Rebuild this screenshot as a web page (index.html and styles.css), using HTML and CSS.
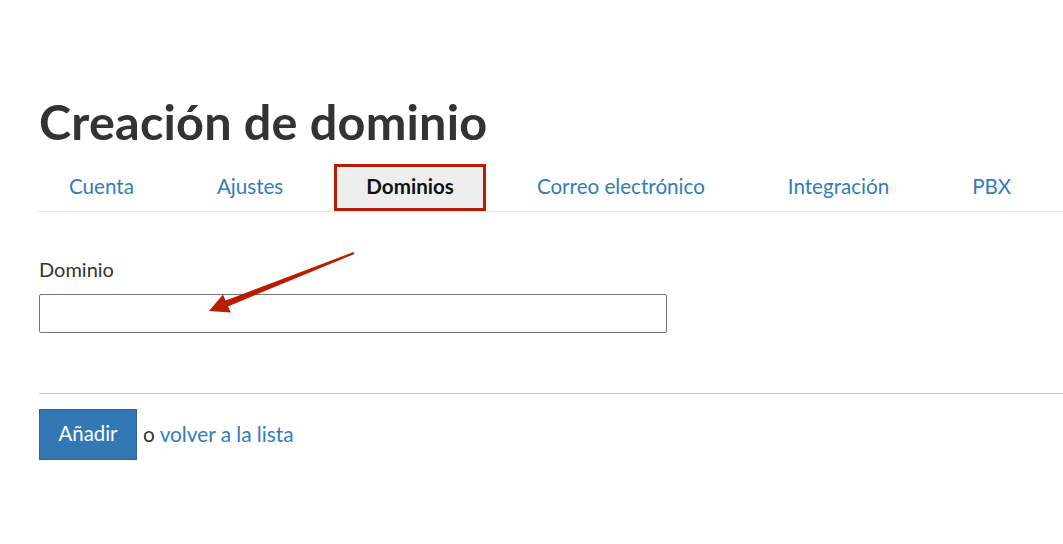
FILE: index.html
```html
<html>
  <head>
    <title>Creación de dominio</title>
    <meta name="viewport" content="width=device-width, initial-scale=1.0">
    <link rel="stylesheet" href="styles.css">
  </head>

  <body>
    <div class="page">
      <h1 class="title">Creación de dominio</h1>

      <ul class="tabs">
        <li class="tab"><a href="#">Cuenta</a></li>
        <li class="tab"><a href="#">Ajustes</a></li>
        <li class="tab active"><a href="#">Dominios</a></li>
        <li class="tab"><a href="#">Correo electrónico</a></li>
        <li class="tab"><a href="#">Integración</a></li>
        <li class="tab"><a href="#">PBX</a></li>
      </ul>

      <form class="domain-form">
        <div class="field">
          <label for="domain">Dominio</label>
          <input type="text" id="domain">
        </div>

        <div class="actions">
          <button type="button" class="btn-add">Añadir</button>
          <span class="back">o <a href="#">volver a la lista</a></span>
        </div>
      </form>
    </div>

    <!-- annotation arrow -->
    <svg class="arrow" width="1063" height="544" viewBox="0 0 1063 544">
      <polygon fill="#b81d00" points="209,311 223,294.5 225.6,300.4 353.6,252 354.4,254 228,306.4 231,312.5"/>
    </svg>
  </body>
</html>
```

FILE: styles.css
```css
*{
  margin: 0px;
  padding: 0px;
  box-sizing: border-box;
}

body{
  font-family: "Lato", "Open Sans", sans-serif;
  color: #333333;
  background-color: white;
  position: relative;
}

.page{
  padding: 93px 0px 0px 39px;
}

.title{
  font-size: 48.6px;
  font-weight: 700;
  line-height: 56px;
  color: #333333;
  letter-spacing: 0.2px;
}

.tabs{
  list-style-type: none;
  display: flex;
  margin-top: 15px;
  margin-left: -2px;
  border-bottom: 1px solid #e6e6e6;
}

.tab{
  margin-right: 19px;
  border: 3px solid transparent;
}

.tab a{
  display: block;
  padding: 0px 29px 2px 29px;
  height: 41px;
  line-height: 39px;
  font-size: 20.6px;
  color: #2f7dbd;
  text-decoration: none;
}

.tab.active{
  border-color: #b81d00;
  background-color: #eeeeee;
}

.tab.active a{
  color: #111111;
  font-weight: 700;
}

.domain-form{
  padding-top: 46px;
}

.field label{
  display: block;
  font-size: 20px;
  line-height: 22px;
  color: #333333;
  margin-bottom: 14px;
}

.field input{
  width: 628px;
  height: 39px;
  border: 1px solid #777777;
  border-radius: 2px;
  outline: none;
  font-size: 16px;
  padding: 0px 8px;
}

.actions{
  margin-top: 60px;
  border-top: 1px solid #cccccc;
  padding-top: 15px;
  display: flex;
  align-items: center;
}

.btn-add{
  width: 98px;
  height: 51px;
  padding-bottom: 3px;
  background-color: #3378b5;
  border: 1px solid #2a6496;
  color: white;
  font-family: "Lato", "Open Sans", sans-serif;
  font-size: 20.4px;
}

.back{
  margin-left: 6px;
  margin-bottom: 3px;
  font-size: 20.8px;
  color: #333333;
}

.back a{
  color: #2f7dbd;
  text-decoration: none;
}

.arrow{
  position: absolute;
  left: 0px;
  top: 0px;
  pointer-events: none;
}
```
